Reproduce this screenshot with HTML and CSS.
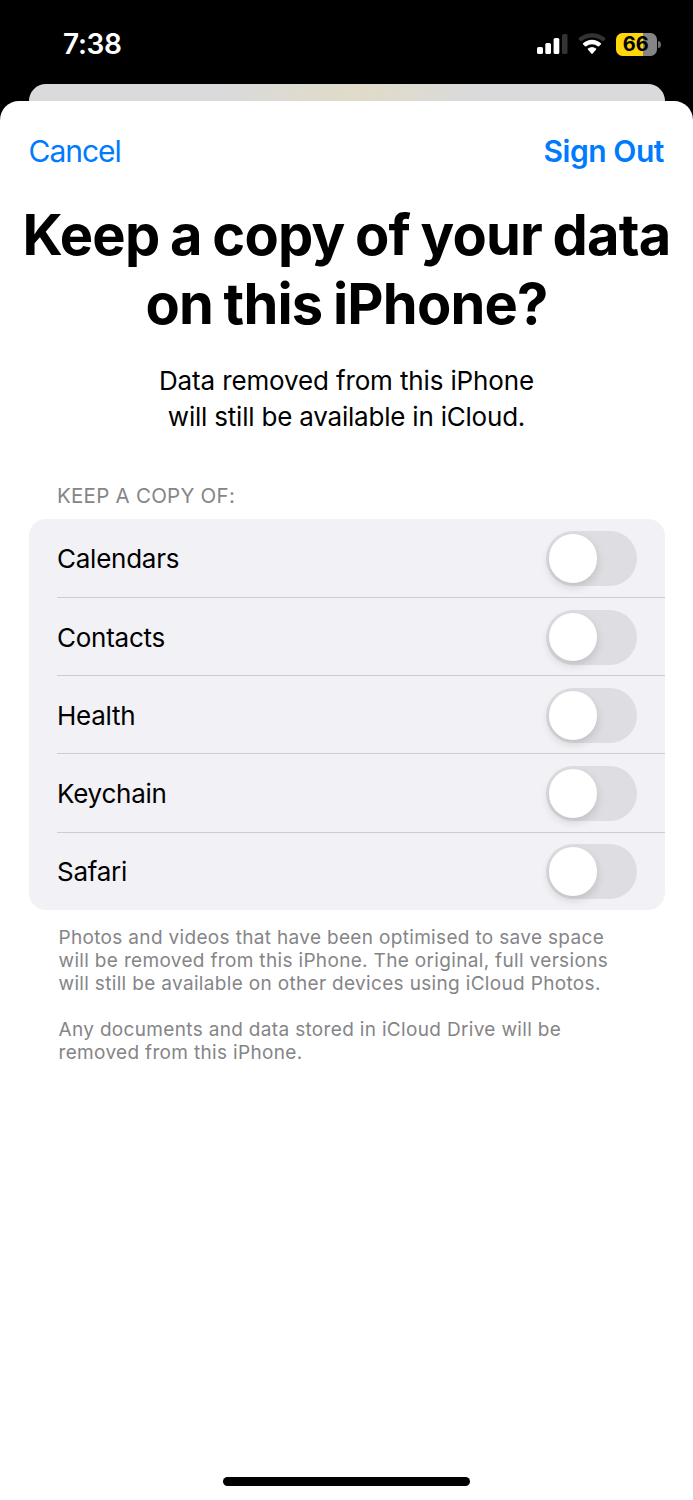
FILE: index.html
```html
<!DOCTYPE html>
<html lang="en">
<head>
<meta charset="utf-8">
<title>Sign Out</title>
<link rel="stylesheet" href="styles.css">
</head>
<body>
<header class="status">
  <span class="time">7:38</span>
  <div class="indicators">
    <svg class="signal" width="31" height="22" viewBox="0 0 31 22"><rect x="0" y="14" width="6" height="7" rx="1.6" fill="#fff"/><rect x="8.300" y="10" width="5.700" height="11" rx="1.600" fill="#fff"/><rect x="16.600" y="5" width="5.700" height="16" rx="1.600" fill="#fff"/><rect x="25" y="1" width="5.500" height="20" rx="1.600" fill="#333"/></svg>
    <svg class="wifi" width="28" height="22" viewBox="0 0 28 22" fill="#fff"><path fill="#333" d="M.6 6.200Q0 5.500.7 4.900Q6.500.200 14 .200Q21.500.200 27.300 4.900Q28 5.500 27.400 6.200L25.600 8Q25 8.500 24.300 8Q19.700 4.500 14 4.500Q8.300 4.500 3.700 8Q3 8.500 2.400 8Z"/><path d="M5 11.300Q4.500 10.700 5.100 10.200Q9 6.700 14 6.700Q19 6.700 22.900 10.200Q23.500 10.700 23 11.300L21 13.300Q20.500 13.800 19.800 13.300Q17.200 11.200 14 11.200Q10.800 11.200 8.200 13.300Q7.500 13.800 7 13.300Z"/><path d="M9.900 16.600Q9.300 16 10 15.400Q11.800 13.900 14 13.900Q16.200 13.900 18 15.400Q18.700 16 18.100 16.600L14.700 20.500Q14 21.300 13.300 20.500Z"/></svg>
    <div class="battery"><span>66</span></div><i class="nub"></i>
  </div>
</header>
<div class="behind"></div>
<main class="sheet">
  <nav class="nav"><a class="cancel">Cancel</a><a class="signout">Sign Out</a></nav>
  <h1>Keep a copy of your data<br>on this iPhone?</h1>
  <p class="sub">Data removed from this iPhone<br><span class="s2">will still be available in iCloud.</span></p>
  <h2>KEEP A COPY OF:</h2>
  <ul class="list">
    <li><span>Calendars</span><i class="toggle"></i></li>
    <li><span>Contacts</span><i class="toggle"></i></li>
    <li><span>Health</span><i class="toggle"></i></li>
    <li><span>Keychain</span><i class="toggle"></i></li>
    <li><span>Safari</span><i class="toggle"></i></li>
  </ul>
  <div class="notes">
    <p>Photos and videos that have been optimised to save space<br>will be removed from this iPhone. The original, full versions<br>will still be available on other devices using iCloud Photos.</p>
    <p>Any documents and data stored in iCloud Drive will be<br>removed from this iPhone.</p>
  </div>
  <div class="home"></div>
</main>
</body>
</html>
```
FILE: styles.css
```css
* { box-sizing: border-box; }
body { margin: 0; width: 693px; height: 1500px; overflow: hidden; background: #000; color: #000; font-family: Inter, "Liberation Sans", sans-serif; display: flex; flex-direction: column; }
h1, h2, p, ul { margin: 0; padding: 0; font-weight: 400; }
.status { height: 83.5px; padding: 5px 32.5px 0 63px; display: flex; align-items: center; justify-content: space-between; color: #fff; }
.time { font-size: 28px; font-weight: 600; letter-spacing: -.3px; }
.indicators { display: flex; align-items: center; }
.wifi { margin-left: 9.5px; }
.battery { margin-left: 10.5px; width: 40.5px; height: 23px; border-radius: 6.5px; background: linear-gradient(90deg, #ffd60a 67%, #858585 67%); color: #000; font-size: 20px; font-weight: 700; line-height: 23px; text-align: center; padding-right: 1px; }
.nub { width: 2.5px; height: 7px; margin-left: 1.5px; border-radius: 0 3px 3px 0 / 0 3.5px 3.5px 0; background: #707070; }
.behind { height: 17.5px; margin: 0 28.5px; border-radius: 17px 17px 0 0; background: linear-gradient(90deg, #dadadc 30%, #dfdbcb 47%, #e0dbc9 53%, #dadadc 70%); }
.sheet { flex: 1; background: #fff; border-radius: 19px 19px 0 0; display: flex; flex-direction: column; }
.nav { height: 100px; padding: 0 29px 0 28.5px; display: flex; align-items: center; justify-content: space-between; color: #007aff; font-size: 30px; }
.cancel { letter-spacing: -1px; }
.signout { font-weight: 600; letter-spacing: -.45px; }
h1 { font-size: 56px; line-height: 69px; font-weight: 700; text-align: center; white-space: nowrap; letter-spacing: -.8px; word-spacing: -1.9px; }
.sub { margin-top: 24px; font-size: 26px; line-height: 36px; text-align: center; letter-spacing: -.14px; }
.s2 { letter-spacing: -.21px; }
h2 { margin: 48px 0 0 57px; font-size: 20.5px; line-height: 26px; letter-spacing: .25px; color: #858589; }
.list { margin: 10px 28.5px 0; background: #f2f1f6; border-radius: 17px; list-style: none; }
.list li { height: 78.2px; margin-left: 28.5px; padding: 1.5px 28px 0 0; display: flex; align-items: center; justify-content: space-between; font-size: 26px; letter-spacing: -.25px; }
.list li + li { border-top: 1px solid #cdccd1; }
.list li:first-child { height: 78px; }
.toggle { width: 91px; height: 55px; padding: 3px; border-radius: 28px; background: #dedde2; }
.toggle::before { content: ""; display: block; width: 48.5px; height: 48.5px; border-radius: 50%; background: #fff; box-shadow: 0 4px 10px #00000024; }
.notes { margin: 16px 0 0 58.5px; color: #858587; font-size: 19px; line-height: 23.1px; letter-spacing: .33px; }
.notes p + p { margin-top: 23px; }
.home { width: 247px; height: 9px; margin: auto auto 14px; border-radius: 5px; background: #000; }
```
